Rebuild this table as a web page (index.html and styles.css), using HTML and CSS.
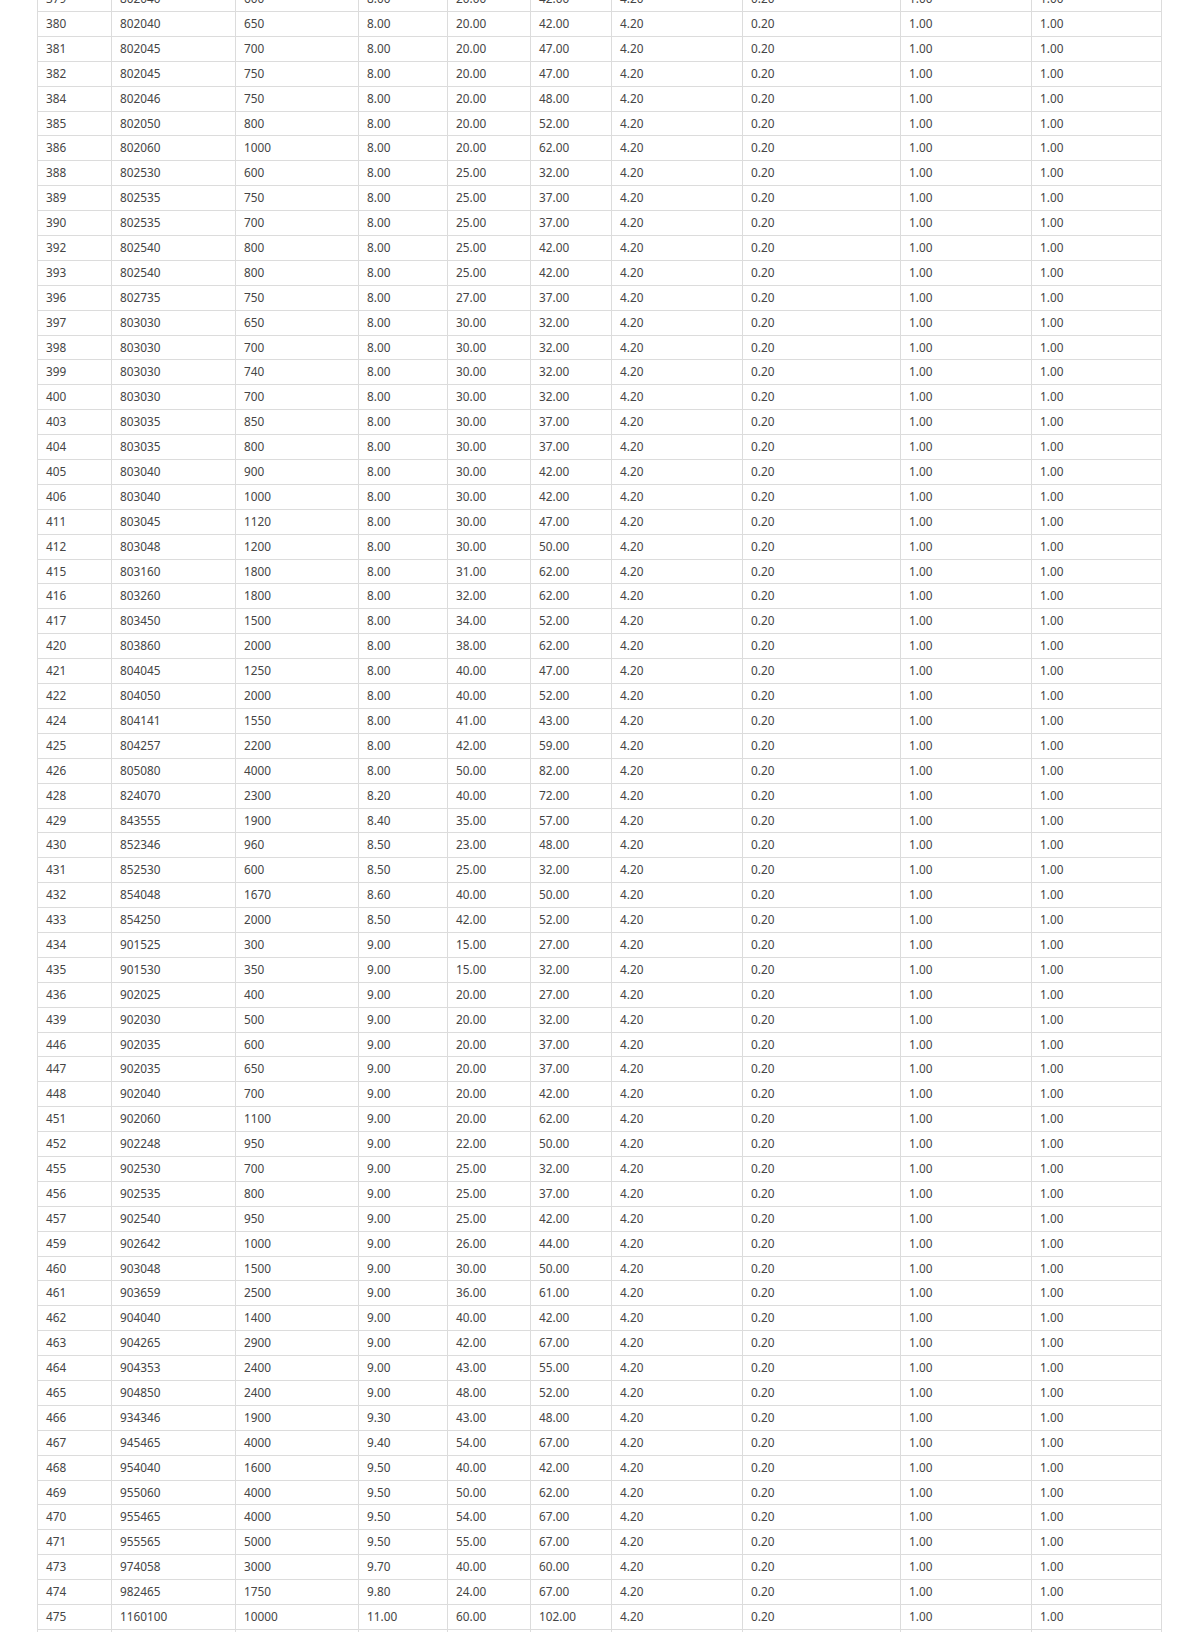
FILE: index.html
```
<!DOCTYPE html>
<html lang="en">
<head>
<meta charset="utf-8">
<title>Table</title>
<link rel="stylesheet" href="styles.css">
</head>
<body>
<div class="page">
<table class="grid">
<colgroup>
<col class="c1"><col class="c2"><col class="c3"><col class="c4"><col class="c5"><col class="c6"><col class="c7"><col class="c8"><col class="c9"><col class="c10">
</colgroup>
<tbody>
<tr><td>379</td><td>802040</td><td>600</td><td>8.00</td><td>20.00</td><td>42.00</td><td>4.20</td><td>0.20</td><td>1.00</td><td>1.00</td></tr>
<tr><td>380</td><td>802040</td><td>650</td><td>8.00</td><td>20.00</td><td>42.00</td><td>4.20</td><td>0.20</td><td>1.00</td><td>1.00</td></tr>
<tr><td>381</td><td>802045</td><td>700</td><td>8.00</td><td>20.00</td><td>47.00</td><td>4.20</td><td>0.20</td><td>1.00</td><td>1.00</td></tr>
<tr><td>382</td><td>802045</td><td>750</td><td>8.00</td><td>20.00</td><td>47.00</td><td>4.20</td><td>0.20</td><td>1.00</td><td>1.00</td></tr>
<tr><td>384</td><td>802046</td><td>750</td><td>8.00</td><td>20.00</td><td>48.00</td><td>4.20</td><td>0.20</td><td>1.00</td><td>1.00</td></tr>
<tr><td>385</td><td>802050</td><td>800</td><td>8.00</td><td>20.00</td><td>52.00</td><td>4.20</td><td>0.20</td><td>1.00</td><td>1.00</td></tr>
<tr><td>386</td><td>802060</td><td>1000</td><td>8.00</td><td>20.00</td><td>62.00</td><td>4.20</td><td>0.20</td><td>1.00</td><td>1.00</td></tr>
<tr><td>388</td><td>802530</td><td>600</td><td>8.00</td><td>25.00</td><td>32.00</td><td>4.20</td><td>0.20</td><td>1.00</td><td>1.00</td></tr>
<tr><td>389</td><td>802535</td><td>750</td><td>8.00</td><td>25.00</td><td>37.00</td><td>4.20</td><td>0.20</td><td>1.00</td><td>1.00</td></tr>
<tr><td>390</td><td>802535</td><td>700</td><td>8.00</td><td>25.00</td><td>37.00</td><td>4.20</td><td>0.20</td><td>1.00</td><td>1.00</td></tr>
<tr><td>392</td><td>802540</td><td>800</td><td>8.00</td><td>25.00</td><td>42.00</td><td>4.20</td><td>0.20</td><td>1.00</td><td>1.00</td></tr>
<tr><td>393</td><td>802540</td><td>800</td><td>8.00</td><td>25.00</td><td>42.00</td><td>4.20</td><td>0.20</td><td>1.00</td><td>1.00</td></tr>
<tr><td>396</td><td>802735</td><td>750</td><td>8.00</td><td>27.00</td><td>37.00</td><td>4.20</td><td>0.20</td><td>1.00</td><td>1.00</td></tr>
<tr><td>397</td><td>803030</td><td>650</td><td>8.00</td><td>30.00</td><td>32.00</td><td>4.20</td><td>0.20</td><td>1.00</td><td>1.00</td></tr>
<tr><td>398</td><td>803030</td><td>700</td><td>8.00</td><td>30.00</td><td>32.00</td><td>4.20</td><td>0.20</td><td>1.00</td><td>1.00</td></tr>
<tr><td>399</td><td>803030</td><td>740</td><td>8.00</td><td>30.00</td><td>32.00</td><td>4.20</td><td>0.20</td><td>1.00</td><td>1.00</td></tr>
<tr><td>400</td><td>803030</td><td>700</td><td>8.00</td><td>30.00</td><td>32.00</td><td>4.20</td><td>0.20</td><td>1.00</td><td>1.00</td></tr>
<tr><td>403</td><td>803035</td><td>850</td><td>8.00</td><td>30.00</td><td>37.00</td><td>4.20</td><td>0.20</td><td>1.00</td><td>1.00</td></tr>
<tr><td>404</td><td>803035</td><td>800</td><td>8.00</td><td>30.00</td><td>37.00</td><td>4.20</td><td>0.20</td><td>1.00</td><td>1.00</td></tr>
<tr><td>405</td><td>803040</td><td>900</td><td>8.00</td><td>30.00</td><td>42.00</td><td>4.20</td><td>0.20</td><td>1.00</td><td>1.00</td></tr>
<tr><td>406</td><td>803040</td><td>1000</td><td>8.00</td><td>30.00</td><td>42.00</td><td>4.20</td><td>0.20</td><td>1.00</td><td>1.00</td></tr>
<tr><td>411</td><td>803045</td><td>1120</td><td>8.00</td><td>30.00</td><td>47.00</td><td>4.20</td><td>0.20</td><td>1.00</td><td>1.00</td></tr>
<tr><td>412</td><td>803048</td><td>1200</td><td>8.00</td><td>30.00</td><td>50.00</td><td>4.20</td><td>0.20</td><td>1.00</td><td>1.00</td></tr>
<tr><td>415</td><td>803160</td><td>1800</td><td>8.00</td><td>31.00</td><td>62.00</td><td>4.20</td><td>0.20</td><td>1.00</td><td>1.00</td></tr>
<tr><td>416</td><td>803260</td><td>1800</td><td>8.00</td><td>32.00</td><td>62.00</td><td>4.20</td><td>0.20</td><td>1.00</td><td>1.00</td></tr>
<tr><td>417</td><td>803450</td><td>1500</td><td>8.00</td><td>34.00</td><td>52.00</td><td>4.20</td><td>0.20</td><td>1.00</td><td>1.00</td></tr>
<tr><td>420</td><td>803860</td><td>2000</td><td>8.00</td><td>38.00</td><td>62.00</td><td>4.20</td><td>0.20</td><td>1.00</td><td>1.00</td></tr>
<tr><td>421</td><td>804045</td><td>1250</td><td>8.00</td><td>40.00</td><td>47.00</td><td>4.20</td><td>0.20</td><td>1.00</td><td>1.00</td></tr>
<tr><td>422</td><td>804050</td><td>2000</td><td>8.00</td><td>40.00</td><td>52.00</td><td>4.20</td><td>0.20</td><td>1.00</td><td>1.00</td></tr>
<tr><td>424</td><td>804141</td><td>1550</td><td>8.00</td><td>41.00</td><td>43.00</td><td>4.20</td><td>0.20</td><td>1.00</td><td>1.00</td></tr>
<tr><td>425</td><td>804257</td><td>2200</td><td>8.00</td><td>42.00</td><td>59.00</td><td>4.20</td><td>0.20</td><td>1.00</td><td>1.00</td></tr>
<tr><td>426</td><td>805080</td><td>4000</td><td>8.00</td><td>50.00</td><td>82.00</td><td>4.20</td><td>0.20</td><td>1.00</td><td>1.00</td></tr>
<tr><td>428</td><td>824070</td><td>2300</td><td>8.20</td><td>40.00</td><td>72.00</td><td>4.20</td><td>0.20</td><td>1.00</td><td>1.00</td></tr>
<tr><td>429</td><td>843555</td><td>1900</td><td>8.40</td><td>35.00</td><td>57.00</td><td>4.20</td><td>0.20</td><td>1.00</td><td>1.00</td></tr>
<tr><td>430</td><td>852346</td><td>960</td><td>8.50</td><td>23.00</td><td>48.00</td><td>4.20</td><td>0.20</td><td>1.00</td><td>1.00</td></tr>
<tr><td>431</td><td>852530</td><td>600</td><td>8.50</td><td>25.00</td><td>32.00</td><td>4.20</td><td>0.20</td><td>1.00</td><td>1.00</td></tr>
<tr><td>432</td><td>854048</td><td>1670</td><td>8.60</td><td>40.00</td><td>50.00</td><td>4.20</td><td>0.20</td><td>1.00</td><td>1.00</td></tr>
<tr><td>433</td><td>854250</td><td>2000</td><td>8.50</td><td>42.00</td><td>52.00</td><td>4.20</td><td>0.20</td><td>1.00</td><td>1.00</td></tr>
<tr><td>434</td><td>901525</td><td>300</td><td>9.00</td><td>15.00</td><td>27.00</td><td>4.20</td><td>0.20</td><td>1.00</td><td>1.00</td></tr>
<tr><td>435</td><td>901530</td><td>350</td><td>9.00</td><td>15.00</td><td>32.00</td><td>4.20</td><td>0.20</td><td>1.00</td><td>1.00</td></tr>
<tr><td>436</td><td>902025</td><td>400</td><td>9.00</td><td>20.00</td><td>27.00</td><td>4.20</td><td>0.20</td><td>1.00</td><td>1.00</td></tr>
<tr><td>439</td><td>902030</td><td>500</td><td>9.00</td><td>20.00</td><td>32.00</td><td>4.20</td><td>0.20</td><td>1.00</td><td>1.00</td></tr>
<tr><td>446</td><td>902035</td><td>600</td><td>9.00</td><td>20.00</td><td>37.00</td><td>4.20</td><td>0.20</td><td>1.00</td><td>1.00</td></tr>
<tr><td>447</td><td>902035</td><td>650</td><td>9.00</td><td>20.00</td><td>37.00</td><td>4.20</td><td>0.20</td><td>1.00</td><td>1.00</td></tr>
<tr><td>448</td><td>902040</td><td>700</td><td>9.00</td><td>20.00</td><td>42.00</td><td>4.20</td><td>0.20</td><td>1.00</td><td>1.00</td></tr>
<tr><td>451</td><td>902060</td><td>1100</td><td>9.00</td><td>20.00</td><td>62.00</td><td>4.20</td><td>0.20</td><td>1.00</td><td>1.00</td></tr>
<tr><td>452</td><td>902248</td><td>950</td><td>9.00</td><td>22.00</td><td>50.00</td><td>4.20</td><td>0.20</td><td>1.00</td><td>1.00</td></tr>
<tr><td>455</td><td>902530</td><td>700</td><td>9.00</td><td>25.00</td><td>32.00</td><td>4.20</td><td>0.20</td><td>1.00</td><td>1.00</td></tr>
<tr><td>456</td><td>902535</td><td>800</td><td>9.00</td><td>25.00</td><td>37.00</td><td>4.20</td><td>0.20</td><td>1.00</td><td>1.00</td></tr>
<tr><td>457</td><td>902540</td><td>950</td><td>9.00</td><td>25.00</td><td>42.00</td><td>4.20</td><td>0.20</td><td>1.00</td><td>1.00</td></tr>
<tr><td>459</td><td>902642</td><td>1000</td><td>9.00</td><td>26.00</td><td>44.00</td><td>4.20</td><td>0.20</td><td>1.00</td><td>1.00</td></tr>
<tr><td>460</td><td>903048</td><td>1500</td><td>9.00</td><td>30.00</td><td>50.00</td><td>4.20</td><td>0.20</td><td>1.00</td><td>1.00</td></tr>
<tr><td>461</td><td>903659</td><td>2500</td><td>9.00</td><td>36.00</td><td>61.00</td><td>4.20</td><td>0.20</td><td>1.00</td><td>1.00</td></tr>
<tr><td>462</td><td>904040</td><td>1400</td><td>9.00</td><td>40.00</td><td>42.00</td><td>4.20</td><td>0.20</td><td>1.00</td><td>1.00</td></tr>
<tr><td>463</td><td>904265</td><td>2900</td><td>9.00</td><td>42.00</td><td>67.00</td><td>4.20</td><td>0.20</td><td>1.00</td><td>1.00</td></tr>
<tr><td>464</td><td>904353</td><td>2400</td><td>9.00</td><td>43.00</td><td>55.00</td><td>4.20</td><td>0.20</td><td>1.00</td><td>1.00</td></tr>
<tr><td>465</td><td>904850</td><td>2400</td><td>9.00</td><td>48.00</td><td>52.00</td><td>4.20</td><td>0.20</td><td>1.00</td><td>1.00</td></tr>
<tr><td>466</td><td>934346</td><td>1900</td><td>9.30</td><td>43.00</td><td>48.00</td><td>4.20</td><td>0.20</td><td>1.00</td><td>1.00</td></tr>
<tr><td>467</td><td>945465</td><td>4000</td><td>9.40</td><td>54.00</td><td>67.00</td><td>4.20</td><td>0.20</td><td>1.00</td><td>1.00</td></tr>
<tr><td>468</td><td>954040</td><td>1600</td><td>9.50</td><td>40.00</td><td>42.00</td><td>4.20</td><td>0.20</td><td>1.00</td><td>1.00</td></tr>
<tr><td>469</td><td>955060</td><td>4000</td><td>9.50</td><td>50.00</td><td>62.00</td><td>4.20</td><td>0.20</td><td>1.00</td><td>1.00</td></tr>
<tr><td>470</td><td>955465</td><td>4000</td><td>9.50</td><td>54.00</td><td>67.00</td><td>4.20</td><td>0.20</td><td>1.00</td><td>1.00</td></tr>
<tr><td>471</td><td>955565</td><td>5000</td><td>9.50</td><td>55.00</td><td>67.00</td><td>4.20</td><td>0.20</td><td>1.00</td><td>1.00</td></tr>
<tr><td>473</td><td>974058</td><td>3000</td><td>9.70</td><td>40.00</td><td>60.00</td><td>4.20</td><td>0.20</td><td>1.00</td><td>1.00</td></tr>
<tr><td>474</td><td>982465</td><td>1750</td><td>9.80</td><td>24.00</td><td>67.00</td><td>4.20</td><td>0.20</td><td>1.00</td><td>1.00</td></tr>
<tr><td>475</td><td>1160100</td><td>10000</td><td>11.00</td><td>60.00</td><td>102.00</td><td>4.20</td><td>0.20</td><td>1.00</td><td>1.00</td></tr>
<tr><td>476</td><td>1260120</td><td>12000</td><td>12.00</td><td>60.00</td><td>120.00</td><td>4.20</td><td>0.20</td><td>1.00</td><td>1.00</td></tr>
</tbody>
</table>
</div>
</body>
</html>
```
FILE: styles.css
```
html, body {
  margin: 0;
  padding: 0;
  background: #ffffff;
}

.page {
  padding-left: 37px;
  height: 1632px;
  overflow: hidden;
}

.grid {
  border-collapse: collapse;
  table-layout: fixed;
  width: 1125px;
  margin-top: -13.9px;
  font-family: "Noto Sans", "Open Sans", "Liberation Sans", sans-serif;
  font-size: 11.8px;
  color: #454545;
}

.grid td {
  border: 1px solid #dcdcdc;
  padding: 4px 8px;
  line-height: 15.89px;
  white-space: nowrap;
  text-align: left;
  vertical-align: middle;
}

.c1 { width: 74px; }
.c2 { width: 124px; }
.c3 { width: 123px; }
.c4 { width: 89px; }
.c5 { width: 83px; }
.c6 { width: 81px; }
.c7 { width: 131px; }
.c8 { width: 158px; }
.c9 { width: 131px; }
.c10 { width: 130px; }
```
